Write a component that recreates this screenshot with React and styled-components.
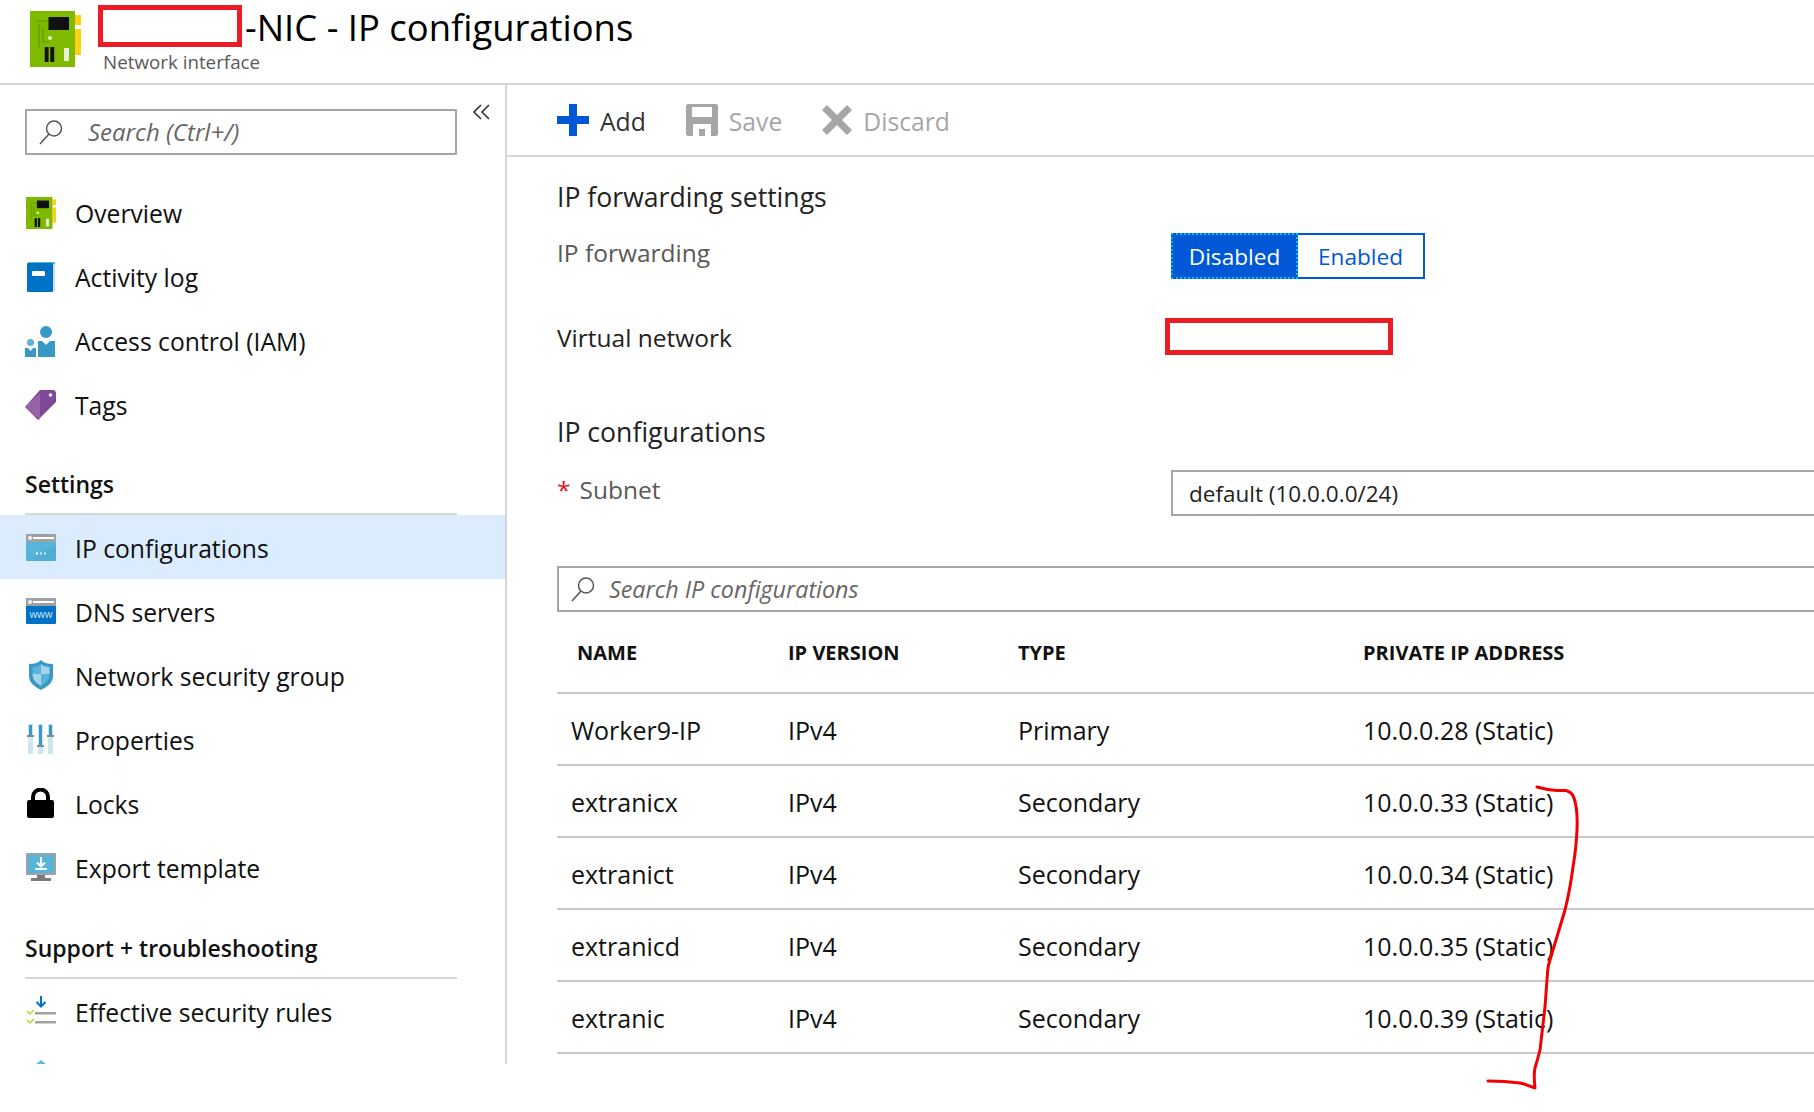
import React from "react";
import styled, { createGlobalStyle } from "styled-components";

const GlobalStyle = createGlobalStyle`
    html, body {
        margin: 0;
        background: #fff;
        overflow: hidden;
    }
    body {
        font-family: "Open Sans", "Noto Sans", sans-serif;
        color: #111;
    }
    * { box-sizing: border-box; }
`;

const menuTop = [
    { label: "Overview", icon: <NicIcon size={30} /> },
    { label: "Activity log", icon: <BookIcon /> },
    { label: "Access control (IAM)", icon: <AccessIcon /> },
    { label: "Tags", icon: <TagIcon /> },
];
const menuSettings = [
    { label: "IP configurations", icon: <WindowIcon />, active: true },
    { label: "DNS servers", icon: <DnsIcon /> },
    { label: "Network security group", icon: <ShieldIcon /> },
    { label: "Properties", icon: <SlidersIcon /> },
    { label: "Locks", icon: <LockIcon /> },
    { label: "Export template", icon: <ExportIcon /> },
];
const rows = [
    ["Worker9-IP", "IPv4", "Primary", "10.0.0.28 (Static)"],
    ["extranicx", "IPv4", "Secondary", "10.0.0.33 (Static)"],
    ["extranict", "IPv4", "Secondary", "10.0.0.34 (Static)"],
    ["extranicd", "IPv4", "Secondary", "10.0.0.35 (Static)"],
    ["extranic", "IPv4", "Secondary", "10.0.0.39 (Static)"],
];

function NicIcon({ size }) {
    return (
        <svg width={size} height={size * 56 / 51} viewBox="0 0 51 56">
            <rect x="45" y="4" width="6" height="10" fill="#fcd116" />
            <rect x="45" y="18" width="6" height="26" fill="#fcd116" />
            <rect width="45" height="56" fill="#7fba00" />
            <path d="M6 10h12M9 13v24M13 17v14h6" stroke="#6a9c00" strokeWidth="1.5" fill="none" />
            <rect x="18.5" y="6" width="20.5" height="13" fill="#111" />
            <circle cx="20" cy="27" r="2" fill="#e8f5c8" />
            <rect x="14.7" y="36" width="3.9" height="15" fill="#111" />
            <rect x="20.3" y="36" width="3.9" height="15" fill="#111" />
            <rect x="34" y="37" width="5" height="13" fill="#e8f0d8" />
        </svg>
    );
}

function BookIcon() {
    return (
        <svg width="30" height="31" viewBox="0 0 30 31">
            <path d="M2 0h27v28h-2V2H2z" fill="#59b4d9" />
            <rect x="1" y="1" width="26" height="29" rx="1" fill="#0072c6" />
            <rect x="6" y="9" width="13" height="5" rx="1" fill="#fff" />
            <rect x="27" y="2" width="2" height="27" fill="#c8dff0" />
        </svg>
    );
}

function AccessIcon() {
    return (
        <svg width="31" height="31" viewBox="0 0 31 31">
            <circle cx="21" cy="6" r="6" fill="#3999c6" />
            <path d="M13 15h4l4 4 4-4h5v16H13z" fill="#3999c6" />
            <circle cx="5.5" cy="16.5" r="3.5" fill="#59b4d9" />
            <path d="M0 22h3l2.500 3 2.500-3h3v9H0z" fill="#3999c6" />
        </svg>
    );
}

function TagIcon() {
    return (
        <svg width="31" height="31" viewBox="0 0 31 31">
            <path d="M15 0h14l2 2v10L13 30 0 17z" fill="#804998" />
            <path d="M0 17 15 3v27z" fill="#9b69ad" opacity="0.8" />
            <circle cx="25.500" cy="5" r="1.800" fill="#fff" />
        </svg>
    );
}

function WindowIcon() {
    return (
        <svg width="30" height="27" viewBox="0 0 30 27">
            <rect width="30" height="27" rx="1" fill="#59b4d9" />
            <path d="M0 1a1 1 0 0 1 1-1h28a1 1 0 0 1 1 1v7H0z" fill="#a0a1a2" />
            <rect x="7" y="3" width="21" height="2" fill="#fff" />
            <circle cx="4" cy="4" r="2" fill="#e8f4fa" />
            <rect x="10" y="18.500" width="2" height="2" fill="#fff" />
            <rect x="14" y="18.500" width="2" height="2" fill="#fff" />
            <rect x="18" y="18.500" width="2" height="2" fill="#fff" />
            <path d="M0 27 30 11v15a1 1 0 0 1-1 1z" fill="#3999c6" opacity="0.25" />
        </svg>
    );
}

function DnsIcon() {
    return (
        <svg width="30" height="26" viewBox="0 0 30 26">
            <rect width="30" height="26" rx="1" fill="#0072c6" />
            <path d="M0 1a1 1 0 0 1 1-1h28a1 1 0 0 1 1 1v7H0z" fill="#a0a1a2" />
            <rect x="7" y="3" width="21" height="2" fill="#fff" />
            <circle cx="4" cy="4" r="2" fill="#e8f4fa" />
            <text x="15" y="20" textAnchor="middle" fontSize="10" fontFamily="Open Sans, sans-serif" fill="#cfe6f5">www</text>
        </svg>
    );
}

function ShieldIcon() {
    return (
        <svg width="24" height="30" viewBox="0 0 24 30">
            <path d="M12 0c3 3 7 4 12 4v12c0 7-6 11-12 14C6 27 0 23 0 16V4c5 0 9-1 12-4z" fill="#3999c6" />
            <path d="M12 4c2 2 5 3 8.500 3v7H12z" fill="#a5d5eb" />
            <path d="M12 14H3.500V7C7 7 10 6 12 4z" fill="#59b4d9" />
            <path d="M12 14h8.500c0 6-4 9-8.500 12z" fill="#59b4d9" />
            <path d="M12 14v12c-4.500-3-8.500-6-8.500-12z" fill="#a5d5eb" />
        </svg>
    );
}

function SlidersIcon() {
    return (
        <svg width="27" height="30" viewBox="0 0 27 30">
            <rect x="1" y="0" width="5" height="30" fill="#cde6f2" />
            <rect x="11" y="0" width="5" height="30" fill="#cde6f2" />
            <rect x="21" y="0" width="5" height="30" fill="#cde6f2" />
            <rect x="2" y="1" width="3" height="10" fill="#3999c6" />
            <rect x="12" y="1" width="3" height="20" fill="#3999c6" />
            <rect x="22" y="1" width="3" height="10" fill="#3999c6" />
            <rect x="0" y="11" width="7" height="2" fill="#8a8a8a" />
            <rect x="10" y="21" width="7" height="2" fill="#8a8a8a" />
            <rect x="20" y="11" width="7" height="2" fill="#8a8a8a" />
        </svg>
    );
}

function LockIcon() {
    return (
        <svg width="27" height="30" viewBox="0 0 27 30">
            <path d="M6 13V9a7.500 7.500 0 0 1 15 0v4" stroke="#000" strokeWidth="4" fill="none" />
            <rect y="12" width="27" height="18" rx="2" fill="#000" />
        </svg>
    );
}

function ExportIcon() {
    return (
        <svg width="30" height="28" viewBox="0 0 30 28">
            <rect width="30" height="22" rx="1" fill="#a0a1a2" />
            <rect x="2" y="2" width="26" height="18" fill="#59b4d9" />
            <path d="M15 4v9M11 9.500l4 4 4-4" stroke="#fff" strokeWidth="2" fill="none" />
            <rect x="9" y="15" width="12" height="2" fill="#fff" />
            <rect x="11" y="22" width="8" height="3" fill="#7a7a7a" />
            <rect x="5" y="25" width="20" height="3" fill="#7a7a7a" />
        </svg>
    );
}

function RulesIcon() {
    return (
        <svg width="30" height="31" viewBox="0 0 30 31">
            <path d="M15 0v10M10.500 6l4.500 4.500L19.500 6" stroke="#0072c6" strokeWidth="2" fill="none" />
            <rect x="9" y="16" width="21" height="2.500" fill="#a0a1a2" />
            <rect x="9" y="25" width="21" height="2.500" fill="#a0a1a2" />
            <path d="M1 15l3 3 4-4M1 24l3 3 4-4" stroke="#b8d432" strokeWidth="1.500" fill="none" />
        </svg>
    );
}

function SearchGlass() {
    return (
        <svg width="24" height="26" viewBox="0 0 24 26">
            <circle cx="15" cy="9.500" r="7.500" stroke="#555" strokeWidth="1.500" fill="none" />
            <path d="M10 15 1 25" stroke="#555" strokeWidth="1.500" fill="none" />
        </svg>
    );
}

export default function App() {
    return (
        <Page>
            <GlobalStyle />
            <Header>
                <HeaderIcon><NicIcon size={51} /></HeaderIcon>
                <HeaderText>
                    <TitleLine>
                        <TitleRedaction />
                        <Title>-NIC - IP configurations</Title>
                    </TitleLine>
                    <Subtitle>Network interface</Subtitle>
                </HeaderText>
            </Header>
            <Body>
                <Sidebar>
                    <SearchRow>
                        <SideSearch>
                            <SearchGlass />
                            <SideSearchText>Search (Ctrl+/)</SideSearchText>
                        </SideSearch>
                        <Collapse>
                            <svg width="18" height="16" viewBox="0 0 18 16">
                                <path d="M8 1 1 8l7 7M16 1 9 8l7 7" stroke="#333" strokeWidth="1.600" fill="none" />
                            </svg>
                        </Collapse>
                    </SearchRow>
                    <Menu>
                        {menuTop.map(item => (
                            <MenuItem key={item.label}>
                                <MenuIcon>{item.icon}</MenuIcon>
                                <MenuLabel>{item.label}</MenuLabel>
                            </MenuItem>
                        ))}
                    </Menu>
                    <GroupHeading $height={78}>Settings</GroupHeading>
                    <Menu>
                        {menuSettings.map(item => (
                            <MenuItem key={item.label} $active={item.active}>
                                <MenuIcon>{item.icon}</MenuIcon>
                                <MenuLabel $lower>{item.label}</MenuLabel>
                            </MenuItem>
                        ))}
                    </Menu>
                    <GroupHeading $height={80}>Support + troubleshooting</GroupHeading>
                    <Menu>
                        <MenuItem>
                            <MenuIcon><RulesIcon /></MenuIcon>
                            <MenuLabel $lower>Effective security rules</MenuLabel>
                        </MenuItem>
                        <MenuItem $peek>
                            <MenuIcon>
                                <svg width="30" height="30" viewBox="0 0 30 30">
                                    <path d="M15 0 22 6H8z" fill="#59b4d9" />
                                </svg>
                            </MenuIcon>
                        </MenuItem>
                    </Menu>
                </Sidebar>
                <Main>
                    <Toolbar>
                        <ToolButton>
                            <svg width="32" height="32" viewBox="0 0 32 32">
                                <path d="M12 0h8v12h12v8H20v12h-8V20H0v-8h12z" fill="#0058d6" />
                            </svg>
                            <ToolLabel>Add</ToolLabel>
                        </ToolButton>
                        <ToolButton $disabled>
                            <svg width="32" height="32" viewBox="0 0 32 32">
                                <path fillRule="evenodd" d="M2 0h28a2 2 0 0 1 2 2v28a2 2 0 0 1-2 2H2a2 2 0 0 1-2-2V2a2 2 0 0 1 2-2zM6 3v10h20V3zM7 20v12h18V20zM13 25h6v7h-6z" fill="#a6a6a6" />
                            </svg>
                            <ToolLabel>Save</ToolLabel>
                        </ToolButton>
                        <ToolButton $disabled>
                            <svg width="30" height="30" viewBox="0 0 30 30">
                                <path d="M5 0l10 10L25 0l5 5-10 10 10 10-5 5-10-10L5 30l-5-5 10-10L0 5z" fill="#a6a6a6" />
                            </svg>
                            <ToolLabel>Discard</ToolLabel>
                        </ToolButton>
                    </Toolbar>
                    <Form>
                        <SectionTitle>IP forwarding settings</SectionTitle>
                        <FieldRow $top={18}>
                            <FieldLabel $muted>IP forwarding</FieldLabel>
                            <Toggle>
                                <ToggleOn>Disabled</ToggleOn>
                                <ToggleOff>Enabled</ToggleOff>
                            </Toggle>
                        </FieldRow>
                        <FieldRow $top={39}>
                            <FieldLabel>Virtual network</FieldLabel>
                            <FieldRedaction />
                        </FieldRow>
                        <SectionTitle $top={57}>IP configurations</SectionTitle>
                        <FieldRow $top={20}>
                            <FieldLabel $muted>
                                <Required>*</Required>Subnet
                            </FieldLabel>
                            <Select>default (10.0.0.0/24)</Select>
                        </FieldRow>
                        <TableSearch>
                            <SearchGlass />
                            <TableSearchText>Search IP configurations</TableSearchText>
                        </TableSearch>
                        <HeadRow>
                            <HeadCell $first>NAME</HeadCell>
                            <HeadCell>IP VERSION</HeadCell>
                            <HeadCell>TYPE</HeadCell>
                            <HeadCell>PRIVATE IP ADDRESS</HeadCell>
                        </HeadRow>
                        {rows.map(row => (
                            <DataRow key={row[0]}>
                                <DataCell $first>{row[0]}</DataCell>
                                <DataCell>{row[1]}</DataCell>
                                <DataCell>{row[2]}</DataCell>
                                <DataCell>{row[3]}</DataCell>
                            </DataRow>
                        ))}
                    </Form>
                </Main>
            </Body>
            {/* hand drawn red bracket lying over the table */}
            <Scribble viewBox="0 0 1814 1112">
                <path d="M1537 787Q1547 790 1557 790.500L1566 790.500Q1572 792 1574 798Q1578 810 1577 830Q1576 850 1573 867Q1570 890 1565 910L1550 960Q1548 965 1547.500 973L1545 1007L1540 1050Q1538 1058 1535 1068Q1533.500 1075 1535 1088Q1528 1085 1520 1083Q1505 1081 1488 1081" stroke="#f00000" strokeWidth="3" fill="none" strokeLinecap="round" strokeLinejoin="round" />
            </Scribble>
        </Page>
    );
}

const Page = styled.div`
    position: relative;
    width: 1814px;
    height: 1112px;
    overflow: hidden;
    background: #fff;
`;
const Header = styled.header`
    display: flex;
    height: 85px;
    border-bottom: 2px solid #d6d6d6;
`;
const HeaderIcon = styled.div`
    padding: 11px 0 0 30px;
    width: 98px;
`;
const HeaderText = styled.div`
    display: flex;
    flex-direction: column;
    padding-top: 5px;
`;
const TitleLine = styled.div`
    display: flex;
    align-items: center;
    height: 42px;
`;
const TitleRedaction = styled.div`
    width: 144px;
    height: 42px;
    border: 5px solid #ed1c24;
`;
const Title = styled.h1`
    margin: 2px 0 0 3px;
    font-size: 36.400px;
    font-weight: 400;
    color: #000;
`;
const Subtitle = styled.div`
    margin: 3px 0 0 5px;
    font-size: 18.800px;
    line-height: 24px;
    color: #595959;
`;
const Body = styled.div`
    display: flex;
    height: 979px;
    overflow: hidden;
`;
const Sidebar = styled.nav`
    width: 507px;
    flex: none;
    border-right: 2px solid #d6d6d6;
    overflow: hidden;
`;
const SearchRow = styled.div`
    display: flex;
    align-items: flex-start;
    padding: 18px 0 0 25px;
    height: 96px;
`;
const SideSearch = styled.div`
    display: flex;
    align-items: center;
    width: 432px;
    height: 46px;
    margin-top: 6px;
    padding-left: 12px;
    border: 2px solid #a6a6a6;
`;
const SideSearchText = styled.span`
    margin-left: 25px;
    padding-bottom: 2px;
    font-size: 24px;
    font-style: italic;
    color: #666;
`;
const Collapse = styled.div`
    margin-left: 16px;
`;
const Menu = styled.div`
    display: flex;
    flex-direction: column;
`;
const MenuItem = styled.div`
    display: flex;
    height: 64px;
    padding-left: 25px;
    background: ${props => (props.$active ? "#daecfd" : "transparent")};
    align-items: ${props => (props.$peek ? "flex-start" : "center")};
    padding-top: ${props => (props.$peek ? "17px" : "0")};
`;
const MenuIcon = styled.span`
    display: flex;
    justify-content: center;
    align-items: center;
    width: 31px;
    margin-right: 19px;
`;
const MenuLabel = styled.span`
    padding-top: ${props => (props.$lower ? "3px" : "0")};
    font-size: 24.700px;
    color: #111;
`;
const GroupHeading = styled.h2`
    display: flex;
    align-items: flex-end;
    width: 432px;
    height: ${props => props.$height}px;
    margin: 0 0 0 25px;
    padding-bottom: 13px;
    border-bottom: 2px solid #d6d6d6;
    font-size: 23px;
    font-weight: 600;
    color: #111;
`;
const Main = styled.main`
    flex: 1;
    min-width: 0;
`;
const Toolbar = styled.div`
    display: flex;
    align-items: center;
    gap: 40px;
    height: 72px;
    padding-left: 50px;
    border-bottom: 2px solid #d6d6d6;
`;
const ToolButton = styled.div`
    display: flex;
    align-items: center;
    gap: 11px;
    color: ${props => (props.$disabled ? "#a6a6a6" : "#333")};
`;
const ToolLabel = styled.span`
    padding-top: 2px;
    font-size: 24.700px;
`;
const Form = styled.div`
    padding: 23px 0 0 50px;
`;
const SectionTitle = styled.h2`
    margin: ${props => props.$top || 0}px 0 0;
    font-size: 26.600px;
    line-height: 35px;
    font-weight: 400;
    color: #222;
`;
const FieldRow = styled.div`
    display: grid;
    grid-template-columns: 614px 1fr;
    margin-top: ${props => props.$top}px;
`;
const FieldLabel = styled.div`
    font-size: 24.500px;
    line-height: 40px;
    color: ${props => (props.$muted ? "#595959" : "#222")};
`;
const Required = styled.span`
    margin-right: 9px;
    color: #e81123;
`;
const Toggle = styled.div`
    display: flex;
    width: 254px;
    height: 46px;
`;
const ToggleOn = styled.div`
    display: flex;
    justify-content: center;
    align-items: center;
    width: 127px;
    padding-top: 1px;
    border: 2px dotted #00bcf2;
    background: #0058d6;
    color: #fff;
    font-size: 22.600px;
`;
const ToggleOff = styled.div`
    display: flex;
    justify-content: center;
    align-items: center;
    width: 127px;
    padding-top: 1px;
    border: 2px solid #0058d6;
    border-left: 0;
    color: #0058d6;
    font-size: 22.600px;
`;
const FieldRedaction = styled.div`
    width: 228px;
    height: 37px;
    margin-left: -6px;
    border: 5px solid #ed1c24;
`;
const Select = styled.div`
    display: flex;
    align-items: center;
    height: 46px;
    padding-left: 16px;
    border: 2px solid #a6a6a6;
    border-right: 0;
    font-size: 22.500px;
    color: #222;
`;
const TableSearch = styled.div`
    display: flex;
    align-items: center;
    height: 46px;
    margin-top: 50px;
    padding-left: 12px;
    border: 2px solid #a6a6a6;
    border-right: 0;
`;
const TableSearchText = styled.span`
    margin-left: 14px;
    font-size: 23.300px;
    font-style: italic;
    color: #666;
`;
const tableColumns = "231px 230px 345px 1fr";
const HeadRow = styled.div`
    display: grid;
    grid-template-columns: ${tableColumns};
    align-items: center;
    height: 82px;
    border-bottom: 2px solid #c8c8c8;
`;
const HeadCell = styled.div`
    padding-left: ${props => (props.$first ? "20px" : "0")};
    font-size: 20px;
    font-weight: 700;
    color: #111;
`;
const DataRow = styled.div`
    display: grid;
    grid-template-columns: ${tableColumns};
    align-items: center;
    height: 72px;
    border-bottom: 2px solid #c8c8c8;
`;
const DataCell = styled.div`
    padding: 2px 0 0 ${props => (props.$first ? "14px" : "0")};
    font-size: 25px;
    color: #111;
`;
const Scribble = styled.svg`
    position: absolute;
    inset: 0;
    width: 1814px;
    height: 1112px;
    pointer-events: none;
`;
